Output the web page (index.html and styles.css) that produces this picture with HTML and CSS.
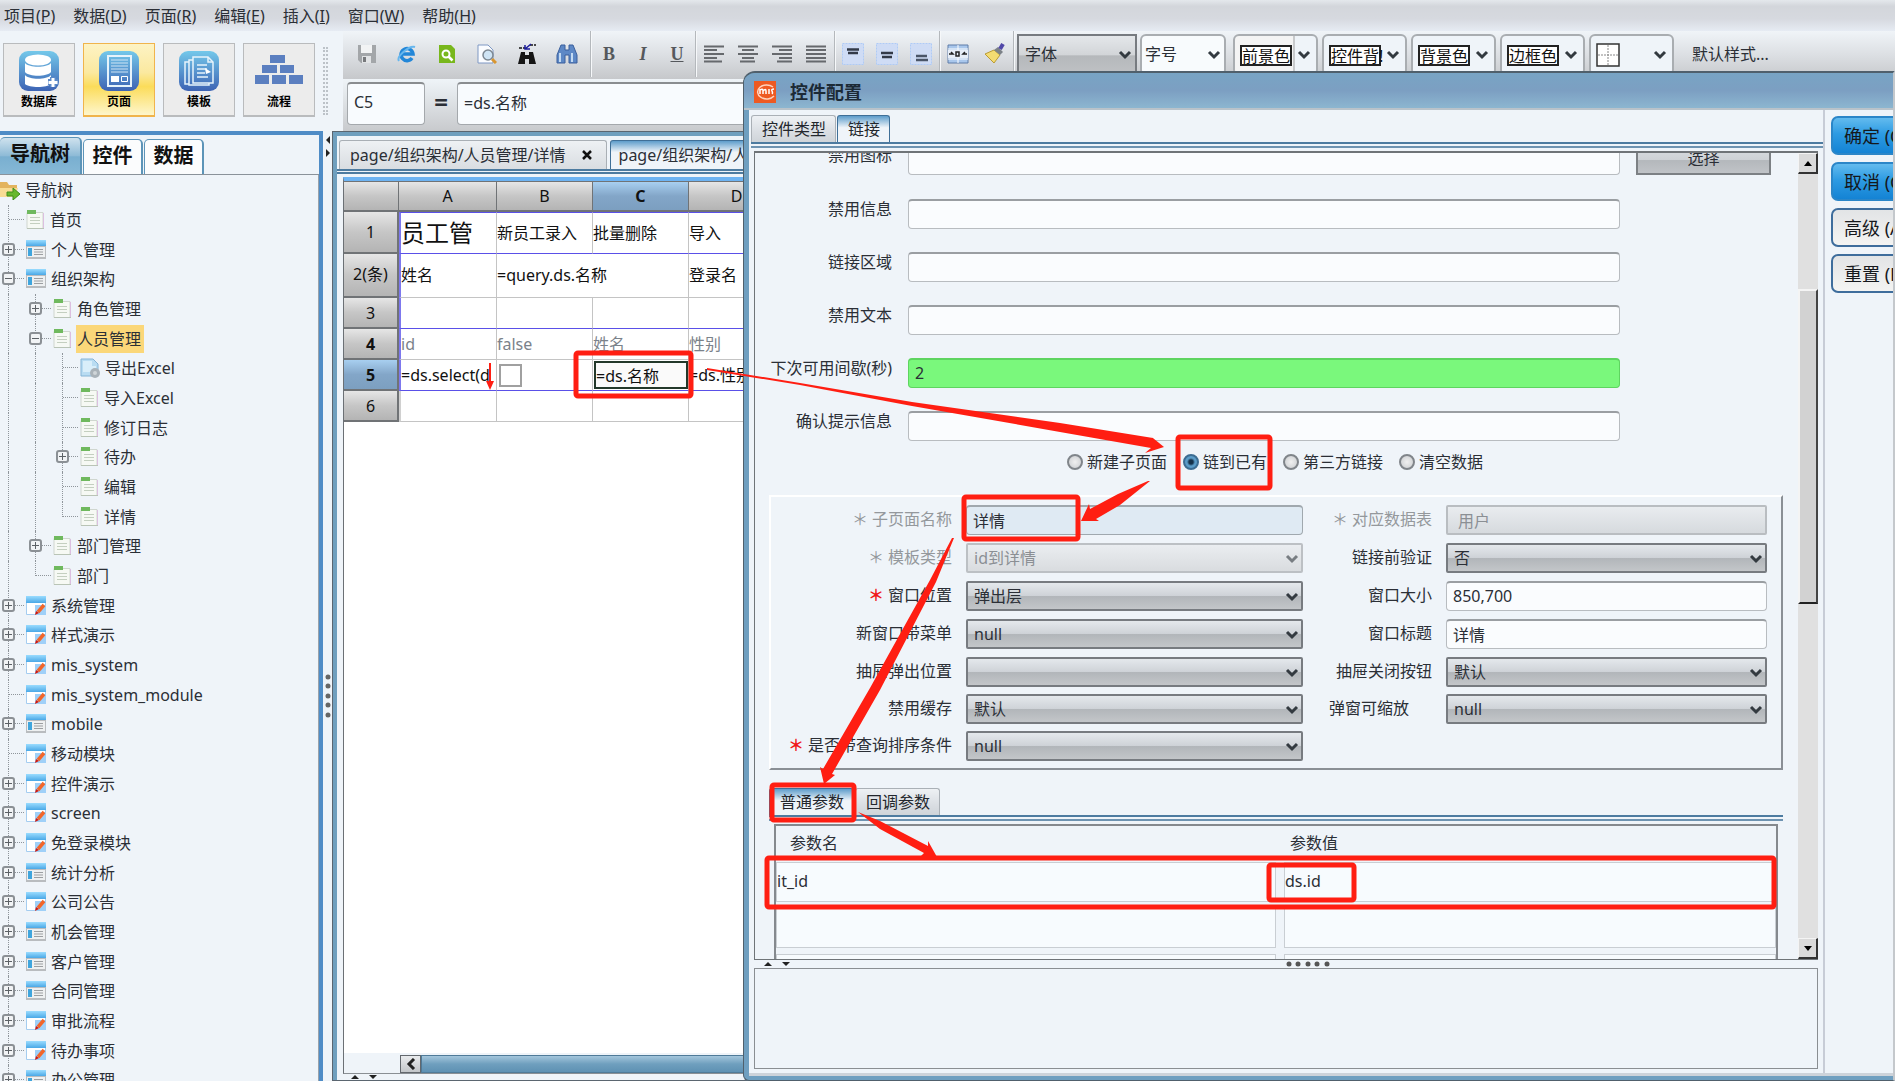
FILE: index.html
```
<!DOCTYPE html>
<html lang="zh-CN">
<head>
  <meta charset="UTF-8" />
  <meta name="viewport" content="width=device-width, initial-scale=1.0"/>
  <title>控件配置</title>
  <link rel="stylesheet" href="styles.css">
</head>
<body>

<!-- shared icons -->
<svg class="defs" aria-hidden="true">
  <defs>
    <linearGradient id="g-app" x1="0" y1="0" x2="0" y2="1"><stop offset="0" stop-color="#74c8ea"/><stop offset="1" stop-color="#3d63b4"/></linearGradient>
    <linearGradient id="g-bar" x1="0" y1="0" x2="0" y2="1"><stop offset="0" stop-color="#9adcff"/><stop offset="1" stop-color="#4aa8e6"/></linearGradient>
  </defs>
  <symbol id="i-chev" viewBox="0 0 14 10"><path d="M2 2l5 5 5-5" fill="none" stroke="#333a40" stroke-width="3"/></symbol>
  <symbol id="i-page" viewBox="0 0 20 20">
    <path d="M1 2.500h16v16h-16z" fill="#f6f9f4" stroke="#cfd6cf"/><path d="M17.500 3v16" stroke="#dcbfe0"/>
    <path d="M1 0h9v4h-9z" fill="#6fb95e"/><path d="M4 7.500h10M4 10.500h10M4 13.500h10" stroke="#c4cfc0"/><path d="M1 18.500h17" stroke="#b9c4b6"/>
  </symbol>
  <symbol id="i-module" viewBox="0 0 20 20">
    <path d="M0 0h20v19h-20z" fill="#b9bcbf"/><path d="M1 7h18v10h-18z" fill="#eef0f1"/><path d="M0 0h20v6h-20z" fill="url(#g-bar)"/>
    <path d="M2 8h4v8h-4z" fill="#3fa5dd"/><path d="M8 9.500h9M8 12h9M8 14.500h9" stroke="#9c9fa2"/>
  </symbol>
  <symbol id="i-edit" viewBox="0 0 20 20">
    <path d="M.5.500h19v18h-19z" fill="#fff" stroke="#a5cdf0"/><path d="M0 0h20v7h-20z" fill="url(#g-bar)"/>
    <path d="M9 9h11v10h-11z" fill="#9fd0f8"/><path d="M12 16l6-7" stroke="#f2662a" stroke-width="3.500"/><path d="M9 19l1-4 3 2z" fill="#d3180c"/>
  </symbol>
  <symbol id="i-export" viewBox="0 0 20 20">
    <path d="M1 1h12l5 5v12h-17z" fill="#b9dcf2" stroke="#85b4d6"/><path d="M3 3h9v5h4v6h-13z" fill="#d9eefa"/>
    <circle cx="15" cy="15" r="5" fill="#a9b2b9"/><circle cx="15" cy="15" r="2" fill="#cfd5d9"/>
  </symbol>
  <symbol id="i-folder" viewBox="0 0 20 20">
    <path d="M0 2h7l2 3h8v12h-17z" fill="#e3b45e"/><path d="M0 8h18l-3 9h-15z" fill="#f8dc94"/>
    <path d="M7 12h6v-4l7 6-7 6v-4h-6z" fill="#68b82e" stroke="#3f8f1c"/>
  </symbol>
</svg>

<nav class="menubar">
  <a href="#">项目(<u>P</u>)</a>
  <a href="#">数据(<u>D</u>)</a>
  <a href="#">页面(<u>R</u>)</a>
  <a href="#">编辑(<u>E</u>)</a>
  <a href="#">插入(<u>I</u>)</a>
  <a href="#">窗口(<u>W</u>)</a>
  <a href="#">帮助(<u>H</u>)</a>
</nav>

<header class="top">
  <div class="modes">
    <button class="mode">
      <svg width="40" height="40" viewBox="0 0 40 40"><rect width="40" height="40" rx="9" fill="url(#g-app)"/><g fill="#fff"><ellipse cx="19" cy="9" rx="13" ry="5.500"/><path d="M6 12c4 5 22 5 26 0v9c-4 5-22 5-26 0zM6 24c4 5 22 5 26 0v9c-4 4-22 4-26 0z"/></g><path d="M34 26v10M29 31h10" stroke="#5c8ac8" stroke-width="6"/><path d="M34 27v9M29.500 31.500h9" stroke="#fff" stroke-width="3"/></svg>
      数据库
    </button>
    <button class="mode active">
      <svg width="40" height="40" viewBox="0 0 40 40"><rect width="40" height="40" rx="9" fill="url(#g-app)"/><path d="M9 5h23v30h-23z" fill="none" stroke="#e6f3fb" stroke-width="2"/><path d="M12 9h17M12 12h17M12 15h17M12 18h17M12 21h17" stroke="#cfe4f5"/><path d="M12 25h8v6h-8z" fill="#fff"/><path d="M22.500 25.500h6v5h-6z" fill="none" stroke="#fff"/></svg>
      页面
    </button>
    <button class="mode">
      <svg width="40" height="40" viewBox="0 0 40 40"><rect width="40" height="40" rx="9" fill="url(#g-app)"/><g fill="none" stroke="#e6f3fb" stroke-width="1.500"><path d="M14 6h15l5 5v21h-20zM14 9h-4v25h20v-2M10 11h-4v22h4"/><path d="M29 6v5h5M18 14h10M18 18h10M18 22h8M18 26h11"/></g><path d="M26 17l6 4-5 2z" fill="#fff"/></svg>
      模板
    </button>
    <button class="mode">
      <svg width="48" height="40" viewBox="0 0 48 40"><path d="M15 4h15v8h-15zM7 14h15v8h-15zM25 14h14v8h-14zM0 24h14v9h-14zM17 24h14v9h-14zM34 24h14v9h-14z" fill="#5b7fc0"/></svg>
      流程
    </button>
    <span class="grip"></span>
  </div>

  <div class="tools">
    <div class="iconbar">
      <div class="group files">
        <button class="tool" aria-label="保存"><svg width="20" height="20" viewBox="0 0 20 20"><path d="M1 1h18v18h-15l-3-3z" fill="#a3a6a9"/><path d="M4 1h11v8h-11z" fill="#f2f3f4"/><path d="M5 12h9v7h-9z" fill="#e1e3e5"/><path d="M6 13h3v5h-3z" fill="#77797c"/></svg></button>
        <button class="tool" aria-label="浏览"><svg width="20" height="20" viewBox="0 0 20 20"><path d="M15 14a6 6 0 1 1 1-4h-11" fill="none" stroke="#2387d8" stroke-width="3.500"/><path d="M2 17c-3-4 10-16 16-14" fill="none" stroke="#67b7ee" stroke-width="2"/></svg></button>
        <button class="tool" aria-label="预览"><svg width="20" height="20" viewBox="0 0 20 20"><path d="M2 1h12l4 4v14h-16z" fill="#78b71c"/><circle cx="9" cy="10" r="3.500" fill="none" stroke="#fff" stroke-width="2"/><path d="M11.500 12.500l4 4" stroke="#fff" stroke-width="2.500"/></svg></button>
        <button class="tool" aria-label="打印预览"><svg width="20" height="20" viewBox="0 0 20 20"><path d="M1 1h10l5 5v13h-15z" fill="#fafcff" stroke="#7e98c4"/><circle cx="11" cy="11" r="5" fill="#cfe4f4" stroke="#7d8892" stroke-width="1.500"/><path d="M15 15l4 4" stroke="#d99630" stroke-width="3"/></svg></button>
        <button class="tool" aria-label="替换"><svg width="20" height="22" viewBox="0 0 20 22"><path d="M4 9h4v3h4v-3h4l3 12h-7v-5h-4v5h-7z" fill="#151515"/><path d="M2 5h6M13 2h6" stroke="#151515" stroke-width="1.500" stroke-dasharray="3 1"/><path d="M8 6l6-5M8 2v4h5" fill="none" stroke="#1c1c9c" stroke-width="1.500"/></svg></button>
        <button class="tool" aria-label="查找"><svg width="22" height="20" viewBox="0 0 22 20"><path d="M5 1h4v5h4v-5h4l4 10v8h-8v-8h-4v8h-8v-8z" fill="#5d88c6" stroke="#3a5f9c"/><path d="M4 9v9M16 9v9" stroke="#c3daf2" stroke-width="2"/></svg></button>
      </div>
      <div class="group">
        <button class="tool glyph"><b>B</b></button>
        <button class="tool glyph"><i>I</i></button>
        <button class="tool glyph"><u>U</u></button>
      </div>
      <div class="group">
        <button class="tool" aria-label="左对齐"><svg class="align" width="20" height="18" viewBox="0 0 20 18"><path d="M0 1.500h20M0 5h13M0 9h20M0 13h13M0 16.500h18"/></svg></button>
        <button class="tool" aria-label="居中"><svg class="align" width="20" height="18" viewBox="0 0 20 18"><path d="M0 1.500h20M4 5h12M0 9h20M4 13h12M2 16.500h15"/></svg></button>
        <button class="tool" aria-label="右对齐"><svg class="align" width="20" height="18" viewBox="0 0 20 18"><path d="M0 1.500h20M7 5h13M0 9h20M7 13h13M5 16.500h15"/></svg></button>
        <button class="tool" aria-label="两端对齐"><svg class="align" width="20" height="18" viewBox="0 0 20 18"><path d="M0 1.500h20M0 5h20M0 9h20M0 13h20M0 16.500h20"/></svg></button>
      </div>
      <div class="group">
        <button class="tool" aria-label="顶端"><svg width="22" height="22" viewBox="0 0 22 22"><rect x=".5" y=".5" width="21" height="21" fill="#cfdcf5" stroke="#aecbf7" stroke-dasharray="2 1"/><path d="M5 6.500h12M6 10h10" stroke="#333a48" stroke-width="2.500"/></svg></button>
        <button class="tool" aria-label="中部"><svg width="22" height="22" viewBox="0 0 22 22"><rect x=".5" y=".5" width="21" height="21" fill="#cfdcf5" stroke="#aecbf7" stroke-dasharray="2 1"/><path d="M5 10h12M6 14h10" stroke="#333a48" stroke-width="2.500"/></svg></button>
        <button class="tool" aria-label="底端"><svg width="22" height="22" viewBox="0 0 22 22"><rect x=".5" y=".5" width="21" height="21" fill="#cfdcf5" stroke="#aecbf7" stroke-dasharray="2 1"/><path d="M6 13h11M6 17h12" stroke="#4a5568" stroke-width="2.500"/></svg></button>
      </div>
      <div class="group">
        <button class="tool" aria-label="合并"><svg width="22" height="20" viewBox="0 0 22 20"><path d="M1 1h20v18h-20z" fill="#a9c7ec" stroke="#5f7da8"/><path d="M11 1v18M1 5h20M1 15h20" stroke="#fff"/><path d="M1 6h20v8h-20z" fill="#e7eef7"/><path d="M2 10h4l-2-2M20 10h-4l2-2M9 8h3v4h-3z" fill="none" stroke="#222" stroke-width="1.500"/></svg></button>
        <button class="tool" aria-label="格式刷"><svg width="22" height="22" viewBox="0 0 22 22"><path d="M1 11l9-4 6 5-6 8z" fill="#f4dc72" stroke="#b99a35"/><path d="M10 7l4-3 5 5-3 3z" fill="#7c8288"/><path d="M16 6l3-5" stroke="#5148a8" stroke-width="4"/></svg></button>
      </div>
      <span class="pick pick-font"><select aria-label="字体"><option>字体</option></select><svg width="14" height="10"><use href="#i-chev"/></svg></span>
      <span class="pick pick-size"><select aria-label="字号"><option>字号</option></select><svg width="14" height="10"><use href="#i-chev"/></svg></span>
      <button class="swatch first"><span>前景色</span><svg width="14" height="10"><use href="#i-chev"/></svg></button>
      <button class="swatch"><span>控件背!</span><svg width="14" height="10"><use href="#i-chev"/></svg></button>
      <button class="swatch"><span>背景色</span><svg width="14" height="10"><use href="#i-chev"/></svg></button>
      <button class="swatch"><span>边框色</span><svg width="14" height="10"><use href="#i-chev"/></svg></button>
      <button class="swatch" aria-label="边框"><svg width="24" height="24" viewBox="0 0 24 24"><path d="M1 1h22v22h-22z" fill="#fff" stroke="#333" stroke-width="1.500"/><path d="M12 2v20M2 12h20" stroke="#888" stroke-dasharray="2 1"/></svg><svg width="14" height="10"><use href="#i-chev"/></svg></button>
      <button class="plain">默认样式...</button>
    </div>
    <div class="formula">
      <input class="cell-name" type="text" value="C5" aria-label="单元格">
      <span class="equals">=</span>
      <input class="cell-value" type="text" value="=ds.名称" aria-label="公式">
    </div>
  </div>
</header>

<main class="work">
  <aside class="side">
    <div class="side-tabs">
      <button class="side-tab active">导航树</button>
      <button class="side-tab">控件</button>
      <button class="side-tab">数据</button>
    </div>
    <ul class="tree" id="tree"></ul>
  </aside>

  <div class="splitter">
    <svg width="8" height="24" viewBox="0 0 8 24"><path d="M6 1l-4 4 4 4zM2 14l4 4-4 4z" fill="#222"/></svg>
    <svg class="dots" width="8" height="46" viewBox="0 0 8 46"><g fill="#666"><circle cx="4" cy="4" r="2.500"/><circle cx="4" cy="13" r="2.500"/><circle cx="4" cy="23" r="2.500"/><circle cx="4" cy="32" r="2.500"/><circle cx="4" cy="42" r="2.500"/></g></svg>
  </div>

  <section class="editor">
    <div class="doc-tabs">
      <button class="doc-tab">page/组织架构/人员管理/详情 <svg width="10" height="10" viewBox="0 0 10 10"><path d="M1 1l8 8M9 1l-8 8" stroke="#111" stroke-width="2.500"/></svg></button>
      <button class="doc-tab active">page/组织架构/人员管理</button>
    </div>
    <div class="sheet">
      <table>
        <colgroup><col class="c-head"><col class="c-a"><col><col><col></colgroup>
        <tr class="cols"><th></th><th>A</th><th>B</th><th class="sel">C</th><th>D</th></tr>
        <tr class="r1 line"><th>1</th><td class="big">员工管</td><td>新员工录入</td><td>批量删除</td><td>导入</td></tr>
        <tr class="r2"><th>2(条)</th><td>姓名</td><td colspan="2">=query.ds.名称</td><td>登录名</td></tr>
        <tr class="line"><th>3</th><td></td><td></td><td></td><td></td></tr>
        <tr class="muted"><th class="bold">4</th><td>id</td><td>false</td><td>姓名</td><td>性别</td></tr>
        <tr class="line"><th class="sel">5</th><td>=ds.select(d</td><td><input class="cell-check" type="checkbox" aria-label="false"></td><td><input class="cell-edit" type="text" value="=ds.名称" aria-label="C5"></td><td>=ds.性别</td></tr>
        <tr class="last"><th>6</th><td></td><td></td><td></td><td></td></tr>
      </table>
    </div>
    <div class="hscroll"><button aria-label="向左"><svg width="10" height="12" viewBox="0 0 10 12"><path d="M8 1l-5 5 5 5" fill="none" stroke="#222" stroke-width="3"/></svg></button><span></span></div>
    <div class="under"><svg width="30" height="6" viewBox="0 0 30 6"><path d="M2 5l4-4 4 4zM20 1l4 4 4-4z" fill="#222"/></svg></div>
  </section>
</main>

<section class="dialog" role="dialog" aria-labelledby="dialog-title">
  <div class="titlebar">
    <svg width="22" height="22" viewBox="0 0 22 22"><rect width="22" height="22" fill="#ee5a22"/><path d="M20 15a9 7 0 1 1-1-9" fill="none" stroke="#ffd2bd" stroke-width="1.500"/><path d="M6 13v-5M6 9q3-2 3 1v3M9 10q3-3 3 0v3M15 8v5M20 8q-3 0-2 2t0 3" fill="none" stroke="#fff" stroke-width="1.500"/></svg>
    <h1 id="dialog-title">控件配置</h1>
  </div>
  <div class="dialog-body">
    <div class="dialog-main">
      <div class="tabs">
        <button class="tab">控件类型</button>
        <button class="tab active">链接</button>
      </div>
      <div class="tab-rule"></div>

      <div class="scroller">
        <div class="form">
          <div class="field cut"><label for="f-icon">禁用图标</label><input id="f-icon" type="text"><button class="choose">选择</button></div>
          <div class="field"><label for="f-info">禁用信息</label><input id="f-info" type="text"></div>
          <div class="field"><label for="f-area">链接区域</label><input id="f-area" type="text"></div>
          <div class="field"><label for="f-text">禁用文本</label><input id="f-text" type="text"></div>
          <div class="field"><label for="f-wait">下次可用间歇(秒)</label><input id="f-wait" class="green" type="text" value="2"></div>
          <div class="field"><label for="f-confirm">确认提示信息</label><input id="f-confirm" type="text"></div>

          <div class="radios">
            <label><input type="radio" name="target">新建子页面</label>
            <label><input type="radio" name="target" checked>链到已有</label>
            <label><input type="radio" name="target">第三方链接</label>
            <label><input type="radio" name="target">清空数据</label>
          </div>

          <div class="options">
            <label class="off" for="o-name"><i>＊</i>子页面名称</label>
            <input id="o-name" class="tinted" type="text" value="详情">
            <label class="off" for="o-table"><i>＊</i>对应数据表</label>
            <input id="o-table" class="flat" type="text" value="用户" disabled>

            <label class="off" for="o-type"><i>＊</i>模板类型</label>
            <span class="select off"><select id="o-type" disabled><option>id到详情</option></select><svg width="14" height="10"><use href="#i-chev"/></svg></span>
            <label for="o-check">链接前验证</label>
            <span class="select"><select id="o-check"><option>否</option></select><svg width="14" height="10"><use href="#i-chev"/></svg></span>

            <label for="o-pos"><i>＊</i>窗口位置</label>
            <span class="select"><select id="o-pos"><option>弹出层</option></select><svg width="14" height="10"><use href="#i-chev"/></svg></span>
            <label for="o-size">窗口大小</label>
            <input id="o-size" type="text" value="850,700">

            <label for="o-menu">新窗口带菜单</label>
            <span class="select"><select id="o-menu"><option>null</option></select><svg width="14" height="10"><use href="#i-chev"/></svg></span>
            <label for="o-title">窗口标题</label>
            <input id="o-title" type="text" value="详情">

            <label for="o-drawer">抽屉弹出位置</label>
            <span class="select"><select id="o-drawer"><option></option></select><svg width="14" height="10"><use href="#i-chev"/></svg></span>
            <label for="o-close">抽屉关闭按钮</label>
            <span class="select"><select id="o-close"><option>默认</option></select><svg width="14" height="10"><use href="#i-chev"/></svg></span>

            <label for="o-cache">禁用缓存</label>
            <span class="select"><select id="o-cache"><option>默认</option></select><svg width="14" height="10"><use href="#i-chev"/></svg></span>
            <label class="start" for="o-zoom">弹窗可缩放</label>
            <span class="select"><select id="o-zoom"><option>null</option></select><svg width="14" height="10"><use href="#i-chev"/></svg></span>

            <label for="o-sort"><i>＊</i>是否带查询排序条件</label>
            <span class="select"><select id="o-sort"><option>null</option></select><svg width="14" height="10"><use href="#i-chev"/></svg></span>
          </div>

          <div class="params">
            <div class="tabs">
              <button class="tab active">普通参数</button>
              <button class="tab">回调参数</button>
            </div>
            <div class="tab-rule"></div>
            <div class="param-box">
              <table>
                <tr><th>参数名</th><th>参数值</th></tr>
                <tr><td><div>it_id</div></td><td><div>ds.id</div></td></tr>
                <tr><td><div></div></td><td><div></div></td></tr>
                <tr><td><div></div></td><td><div></div></td></tr>
              </table>
            </div>
          </div>
        </div>
        <div class="vscroll">
          <button aria-label="向上"><svg width="8" height="5" viewBox="0 0 8 5"><path d="M4 0l4 5h-8z"/></svg></button>
          <span class="thumb"></span>
          <button aria-label="向下"><svg width="8" height="5" viewBox="0 0 8 5"><path d="M4 5l4-5h-8z"/></svg></button>
        </div>
      </div>

      <div class="divider">
        <svg width="30" height="6" viewBox="0 0 30 6"><path d="M2 5l4-4 4 4zM20 1l4 4 4-4z" fill="#222"/></svg>
        <svg width="44" height="6" viewBox="0 0 44 6"><g fill="#555"><circle cx="3" cy="3" r="2.500"/><circle cx="12" cy="3" r="2.500"/><circle cx="22" cy="3" r="2.500"/><circle cx="31" cy="3" r="2.500"/><circle cx="41" cy="3" r="2.500"/></g></svg>
      </div>
      <div class="message"></div>
    </div>

    <div class="actions">
      <button class="primary">确定 (O)</button>
      <button class="primary">取消 (C)</button>
      <button>高级 (A)</button>
      <button>重置 (R)</button>
    </div>
  </div>
</section>

<!-- red marks over the whole desktop -->
<svg class="marks" width="1895" height="1081" viewBox="0 0 1895 1081" aria-hidden="true">
  <g fill="none" stroke="#ff1e12" stroke-width="5">
    <rect x="576" y="353" width="115" height="43" rx="2"/>
    <rect x="1178" y="437" width="92" height="51" rx="2"/>
    <rect x="964" y="497" width="114" height="42" rx="2"/>
    <rect x="772" y="785" width="82" height="35" rx="2"/>
    <rect x="767" y="858" width="1007" height="49" rx="2"/>
    <rect x="1269" y="865" width="85" height="35" rx="2"/>
  </g>
  <g fill="#ff1e12">
    <path d="M707 368L800 383 912 402 1060 423 1153 438 1148 434 1164 447 1145 453 1151 448 1060 432 912 406 800 385 707 370z"/>
    <path d="M1150 481L1120 505 1096 519 1099 521 1081 521 1089 504 1090 509 1118 494 1148 481z"/>
    <path d="M954 538L936 582 880 690 832 774 835 775 824 784 820 767 823 769 870 688 930 580 952 538z"/>
    <path d="M858 812L880 821 928 846 928 841 937 857 920 857 924 853 880 829z"/>
    <path d="M489 363h2v18h3l-4 9-4-9h3z"/>
  </g>
</svg>

<script>
  // level, icon, text, branch: '+' closed, '-' open, '' leaf
  const nodes = [
    [0, 'page', '首页', ''],
    [0, 'module', '个人管理', '+'],
    [0, 'module', '组织架构', '-'],
    [1, 'page', '角色管理', '+'],
    [1, 'page', '人员管理', '-'],
    [2, 'export', '导出Excel', ''],
    [2, 'page', '导入Excel', ''],
    [2, 'page', '修订日志', ''],
    [2, 'page', '待办', '+'],
    [2, 'page', '编辑', ''],
    [2, 'page', '详情', ''],
    [1, 'page', '部门管理', '+'],
    [1, 'page', '部门', ''],
    [0, 'edit', '系统管理', '+'],
    [0, 'edit', '样式演示', '+'],
    [0, 'edit', 'mis_system', '+'],
    [0, 'edit', 'mis_system_module', ''],
    [0, 'module', 'mobile', '+'],
    [0, 'edit', '移动模块', ''],
    [0, 'edit', '控件演示', '+'],
    [0, 'edit', 'screen', '+'],
    [0, 'edit', '免登录模块', '+'],
    [0, 'module', '统计分析', '+'],
    [0, 'edit', '公司公告', '+'],
    [0, 'module', '机会管理', '+'],
    [0, 'module', '客户管理', '+'],
    [0, 'module', '合同管理', '+'],
    [0, 'edit', '审批流程', '+'],
    [0, 'edit', '待办事项', '+'],
    [0, 'module', '办公管理', '+'],
  ];

  // is there a later sibling on this level
  function goesOn(index, level) {
    if (level === 0) return true;
    for (let i = index + 1; i < nodes.length; i++) {
      if (nodes[i][0] < level) return false;
      if (nodes[i][0] === level) return true;
    }
    return false;
  }

  const tree = document.getElementById('tree');
  let html = '<li><svg width="20" height="20"><use href="#i-folder"/></svg><a href="#">导航树</a></li>';
  nodes.forEach(([level, icon, text, branch], index) => {
    let row = '';
    for (let l = 0; l < level; l++) {
      row += `<span class="guide${goesOn(index, l) ? ' on' : ''}"></span>`;
    }
    row += `<span class="branch${goesOn(index, level) ? '' : ' end'}">`;
    if (branch) row += `<span class="knob${branch === '+' ? ' plus' : ''}"></span>`;
    row += `</span><svg width="20" height="20" class="${icon}"><use href="#i-${icon}"/></svg>`;
    row += `<a href="#"${text === '人员管理' ? ' class="current"' : ''}>${text}</a>`;
    html += `<li>${row}</li>`;
  });
  tree.innerHTML = html;
</script>

</body>
</html>
```

FILE: styles.css
```
* {
  box-sizing: border-box;
}

body {
  margin: 0;
  height: 100vh;
  overflow: hidden;
  position: relative;
  display: flex;
  flex-direction: column;
  background: #eff4f9;
  color: #2b2f36;
  font-family: "Noto Sans", "Noto Sans CJK SC", sans-serif;
  font-size: 16px;
  line-height: 20px;
}

button,
input,
select {
  font: inherit;
  color: inherit;
  margin: 0;
  padding: 0;
  border-radius: 0;
}

button {
  white-space: nowrap;
  cursor: pointer;
}

a {
  color: inherit;
  text-decoration: none;
}

svg {
  flex: none;
  display: block;
}

.defs {
  position: absolute;
  width: 0;
  height: 0;
}

/* menu */
.menubar {
  flex: none;
  display: flex;
  gap: 18px;
  height: 31px;
  padding: 6px 4px;
  background: linear-gradient(#e4e8ec, #d3d6db 20%, #d6d9df 60%, #e6ebf3);
}

/* toolbar */
.top {
  flex: none;
  display: flex;
  height: 100px;
}

.modes {
  flex: none;
  display: flex;
  gap: 8px;
  width: 343px;
  padding: 12px 3px;
}

.mode {
  width: 72px;
  height: 74px;
  display: flex;
  flex-direction: column;
  align-items: center;
  gap: 1px;
  padding-top: 7px;
  background: #ececec;
  border: 1px solid #b9bbbd;
  border-bottom: 2px solid #b9bbbd;
  color: #000;
  font-size: 12px;
  font-weight: bold;
}

.mode.active {
  background: linear-gradient(#fdf3c4, #fbe9a0 40%, #fbdc5a 60%, #fef6cc);
  border-color: #f0b44c;
}

.grip {
  width: 5px;
  height: 68px;
  margin-top: 4px;
  border-left: 2px dotted #bcc2c8;
  border-right: 2px dotted #bcc2c8;
}

.tools {
  flex: 1;
  min-width: 0;
}

.iconbar {
  display: flex;
  height: 48px;
  background: linear-gradient(#f0f4f8, #dcdfe3 50%, #c6c8cb);
}

.group {
  flex: none;
  display: flex;
  align-items: center;
  gap: 10px;
  height: 46px;
  padding: 0 6px;
  border-right: 1px solid #b4b8bc;
  box-shadow: 1px 0 #f6f8fa;
}

.group.files {
  gap: 16px;
  padding: 0 11px 0 12px;
}

.group:nth-child(5) {
  gap: 13px;
}

.tool {
  width: 24px;
  height: 24px;
  display: flex;
  align-items: center;
  justify-content: center;
  background: none;
  border: 0;
}

.glyph {
  color: #55585c;
  font-family: "Liberation Serif", serif;
  font-size: 18px;
  font-weight: bold;
}

.align {
  fill: none;
  stroke: #66696d;
  stroke-width: 2;
}

.pick {
  flex: none;
  position: relative;
  margin: 3px 0 0 3px;
  height: 42px;
}

.pick select {
  appearance: none;
  width: 100%;
  height: 100%;
  padding: 0 6px 2px;
  background: linear-gradient(#e4e7ea, #d2d5d8 50%, #b5b8bb 52%, #bfc1c4);
  border: 2px solid #777b80;
}

.pick svg {
  position: absolute;
  right: 5px;
  top: 16px;
}

.pick-font {
  width: 120px;
}

.pick-size {
  width: 86px;
  margin-right: 7px;
}

.pick-size select {
  padding: 0 3px 2px;
  background: #f8fbfd;
  border: 2px solid #a9adb1;
  border-radius: 6px;
}

.swatch {
  flex: none;
  display: flex;
  align-items: center;
  justify-content: space-between;
  width: 85px;
  height: 42px;
  margin: 3px 4px 0 0;
  padding: 0 5px;
  background: #eff4f9;
  border: 2px solid #a9adb1;
  border-radius: 6px;
}

.swatch.first {
  background: linear-gradient(90deg, #f4f4f4 58px, #c8cacc 58px, #c8cacc 60px, #eff4f9 60px);
}

.swatch span {
  width: 52px;
  height: 21px;
  border: 2px solid #222;
  background: #fff;
  color: #111;
  line-height: 19px;
}

.plain {
  height: 46px;
  margin-left: 14px;
  background: none;
  border: 0;
}

.formula {
  display: flex;
  align-items: flex-start;
  height: 52px;
  padding: 3px 4px 0;
  background: linear-gradient(#eff4f8, #c8cacd);
}

.formula input {
  height: 43px;
  padding: 0 6px 4px;
  background: #f8fbfe;
  border: 1px solid #a4a8ac;
  border-top: 2px solid #8a8d90;
  border-radius: 4px;
}

.formula .cell-name {
  width: 78px;
}

.equals {
  width: 32px;
  text-align: center;
  font-size: 24px;
  font-weight: bold;
  line-height: 40px;
}

.formula .cell-value {
  flex: 1;
}

/* navigation */
.work {
  flex: 1;
  min-height: 0;
  display: flex;
}

.side {
  flex: none;
  width: 323px;
  border-top: 4px solid #4f8cc6;
  border-right: 4px solid #4f8cc6;
  overflow: hidden;
}

.side-tabs {
  display: flex;
  align-items: flex-end;
  gap: 1px;
  height: 40px;
  border-bottom: 1px solid #8a929a;
}

.side-tab {
  width: 60px;
  height: 35px;
  padding-bottom: 2px;
  background: #fbfcfd;
  border: 1px solid #5c94b8;
  border-bottom: 0;
  border-right-width: 2px;
  border-radius: 5px 5px 0 0;
  color: #111;
  font-size: 20px;
  font-weight: bold;
}

.side-tab.active {
  width: 82px;
  height: 37px;
  padding-bottom: 4px;
  border-left: 0;
  background: linear-gradient(#cfe2ee, #8dbad6 50%, #79afd0 52%, #86b8d6);
}

.tree {
  height: 100%;
  margin: 0;
  padding: 0;
  list-style: none;
  border-right: 1px solid #9aa2aa;
}

/* every third row is one pixel shorter */
.tree li {
  display: flex;
  align-items: center;
  height: 30px;
}

.tree li:nth-child(3n) {
  height: 29px;
}

.tree a {
  height: 28px;
  margin-left: 4px;
  padding: 0 3px 0 1px;
  line-height: 28px;
}

.tree .page + a {
  margin-left: 3px;
}

.tree .current {
  background: #fbd779;
}

.guide,
.branch {
  flex: none;
  position: relative;
  width: 26px;
  height: 100%;
}

.guide {
  width: 27px;
}

.guide.on::before,
.branch::before {
  content: "";
  position: absolute;
  left: 8px;
  top: 0;
  bottom: 0;
  border-left: 1px dotted #8f959b;
}

.branch.end::before {
  bottom: 50%;
}

.branch::after {
  content: "";
  position: absolute;
  left: 9px;
  right: 2px;
  top: 14px;
  border-top: 1px dotted #8f959b;
}

.knob {
  position: absolute;
  z-index: 1;
  left: 2px;
  top: 8px;
  width: 13px;
  height: 13px;
  border: 2px solid #8b9095;
  border-radius: 3px;
  background: linear-gradient(#5c6166, #5c6166) center / 7px 1px no-repeat #f1f3f5;
}

.knob.plus {
  background: linear-gradient(#5c6166, #5c6166) center / 7px 1px no-repeat, linear-gradient(#5c6166, #5c6166) center / 1px 7px no-repeat #f1f3f5;
}

.splitter {
  flex: none;
  display: flex;
  flex-direction: column;
  align-items: center;
  justify-content: space-between;
  width: 9px;
  padding-top: 4px;
}

.splitter .dots {
  margin-bottom: 362px;
}

/* sheet editor */
.editor {
  flex: 1;
  min-width: 0;
  display: flex;
  flex-direction: column;
  border-top: 5px solid #6f9fbe;
  border-left: 5px solid #6f9fbe;
  outline: 1px solid #5b6670;
  outline-offset: -1px;
}

.doc-tabs {
  flex: none;
  display: flex;
  gap: 3px;
  height: 38px;
  padding: 4px 2px 0;
  border-bottom: 5px double #4d7ba0;
}

.doc-tab {
  display: flex;
  align-items: center;
  gap: 16px;
  height: 29px;
  padding: 0 14px 0 10px;
  background: linear-gradient(#eef1f4, #d9dde1);
  border: 1px solid #a9afb5;
  border-bottom: 0;
  border-radius: 3px 3px 0 0;
}

.doc-tab.active {
  padding: 0 9px 0 8px;
  background: linear-gradient(#5e9dcb, #eff4f9 40%);
  border-color: #3f6f97;
}

.sheet {
  flex: 1;
  min-height: 0;
  margin: 3px 0 0 6px;
  overflow: hidden;
  background: #fff;
  border-top: 4px solid #6db3f2;
  border-left: 1px solid #6b7075;
}

.sheet table {
  width: 441px;
  table-layout: fixed;
  border-spacing: 0;
  color: #111;
}

.c-head {
  width: 55px;
}

.c-a {
  width: 98px;
}

.sheet th {
  padding: 0;
  border-right: 2px solid #707376;
  border-bottom: 2px solid #707376;
  background: linear-gradient(#e6e6e6, #c6c6c6 50%, #b4b4b4);
  font-weight: normal;
}

.sheet .cols th {
  border-top: 1px solid #707376;
  border-right-width: 1px;
}

.sheet th.sel {
  background: linear-gradient(#a8cff0, #83a6c8 50%, #7c9fc0);
  font-weight: bold;
}

.sheet th.bold {
  font-weight: bold;
}

.sheet td {
  padding: 0;
  overflow: hidden;
  white-space: nowrap;
  border-right: 1px solid #c4c4c4;
  border-bottom: 1px solid #c4c4c4;
}

.sheet tr {
  height: 31px;
}

.sheet .r1 {
  height: 42px;
}

.sheet .r2 {
  height: 44px;
}

.sheet .r2 td,
.sheet .r2 th {
  padding-bottom: 2px;
}

.sheet .r1 td {
  border-top: 1px solid #5a50e8;
}

.sheet .line td {
  border-bottom: 1px solid #5a50e8;
}

.sheet td:nth-child(2) {
  border-left: 2px solid #7d78ee;
}

.sheet .last td:nth-child(2) {
  border-left-color: #d0d0d0;
}

.sheet .muted td {
  color: #7b828a;
}

.sheet .big {
  font-size: 24px;
}

.cell-check {
  appearance: none;
  display: block;
  width: 23px;
  height: 23px;
  margin-left: 2px;
  background: #fff;
  border: 2px solid #a0a0a0;
}

.cell-edit {
  display: block;
  width: 94px;
  height: 28px;
  margin-left: 1px;
  background: #fafafa;
  border: 2px solid #23382a;
}

.hscroll {
  flex: none;
  display: flex;
  height: 21px;
  margin-left: 6px;
  padding: 2px 0 0 56px;
  border-left: 1px solid #6b7075;
  border-bottom: 1px solid #8a8f94;
}

.hscroll button {
  display: flex;
  align-items: center;
  justify-content: center;
  width: 21px;
  background: linear-gradient(#e9ebed, #c3c6c9);
  border: 1px solid #63686d;
}

.hscroll span {
  flex: 1;
  background: linear-gradient(#a4c6dc, #6f9fbe 50%, #5e91b3);
  border: 1px solid #4f7a98;
}

.under {
  flex: none;
  height: 7px;
  padding-left: 12px;
}

/* dialog */
.dialog {
  position: absolute;
  top: 71px;
  left: 743px;
  right: 0;
  bottom: 0;
  display: flex;
  flex-direction: column;
  background: #6f9fc0;
  border: 1px solid #50606c;
  border-right: 2px solid #c4c8cc;
  border-top-width: 2px;
  border-radius: 12px 0 0 6px;
  padding: 0 0 4px 5px;
  overflow: hidden;
}

.titlebar {
  flex: none;
  display: flex;
  align-items: center;
  gap: 14px;
  height: 37px;
  margin-left: -5px;
  padding: 2px 10px 0;
  background: linear-gradient(#78a4c4, #7c9fc2 50%, #8cb6d0);
  border-bottom: 2px solid #b9c3ca;
}

.titlebar h1 {
  margin: 0;
  font-size: 18px;
  font-weight: bold;
  color: #1c2a36;
}

.dialog-body {
  flex: 1;
  min-height: 0;
  display: flex;
  background: #eff4f9;
  border-bottom: 3px solid #cdd3da;
}

.dialog-main {
  flex: 1;
  min-width: 0;
  display: flex;
  flex-direction: column;
  padding: 5px 0 4px 2px;
  border-right: 2px solid #c7ccd6;
}

.tabs {
  flex: none;
  display: flex;
  gap: 1px;
  height: 27px;
}

.tab {
  padding: 0 9px 0 10px;
  background: linear-gradient(#eef1f4, #dadee3 60%, #cfd4d9);
  border: 1px solid #aab0b6;
  border-bottom: 0;
  border-radius: 3px 3px 0 0;
  color: #23272d;
}

.tab.active {
  background: linear-gradient(#5e9dcb, #eff4f9 45%);
  border-color: #3f6f97;
}

.tab-rule {
  flex: none;
  height: 6px;
  border-top: 2px solid #4d7ba0;
  border-bottom: 2px solid #6e93b1;
}

.scroller {
  flex: 1;
  min-height: 0;
  display: flex;
  margin: 3px 5px 0 3px;
  overflow: hidden;
  border: 1px solid #6f7478;
  border-width: 2px 0 1px 1px;
}

.form {
  flex: 1;
  min-width: 0;
  padding: 0 15px 0 14px;
}

.field {
  display: flex;
  gap: 16px;
  height: 30px;
  margin-bottom: 23px;
}

.field.cut {
  margin-top: -8px;
  margin-bottom: 24px;
}

.field label {
  flex: none;
  width: 123px;
  text-align: right;
  white-space: nowrap;
}

.form input[type="text"] {
  min-width: 0;
  height: 30px;
  padding: 0 6px 2px;
  background: #fafcfe;
  border: 1px solid #b8bcc0;
  border-top: 2px solid #9a9ea2;
  border-radius: 4px;
}

.field input[type="text"] {
  flex: 1;
  max-width: 712px;
}

.form input[type="text"].green {
  background: #7af87c;
  border-color: #5ed460;
}

.choose {
  width: 135px;
  height: 30px;
  padding-bottom: 4px;
  background: linear-gradient(#d9dde1, #cdd1d5 50%, #b4b8bc 52%, #c0c3c7);
  border: 2px solid #7c8084;
}

.radios {
  display: flex;
  gap: 16px;
  height: 31px;
  padding-left: 298px;
}

.radios label {
  display: flex;
  height: 20px;
  gap: 4px;
  align-items: center;
}

.radios input {
  appearance: none;
  width: 16px;
  height: 16px;
  border: 2px solid #80858a;
  border-radius: 50%;
  background: radial-gradient(#f0f0f0, #c9cccf);
}

.radios input:checked {
  border-color: #3c6c92;
  background: radial-gradient(#16324a 2px, #5b9cc8 4px);
}

.field + .radios {
  margin-top: -12px;
}

.options {
  display: grid;
  grid-template-columns: 181px 337px 115px 321px;
  grid-template-rows: repeat(4, 38px) repeat(3, 37px);
  column-gap: 14px;
  justify-content: start;
  margin-top: 12px;
  height: 275px;
  padding-top: 8px;
  border: 2px solid #fff;
  border-right-color: #8a8f95;
  border-bottom-color: #8a8f95;
}

.options label {
  height: 30px;
  line-height: 28px;
  text-align: right;
  white-space: nowrap;
}

.options label i {
  margin-right: 4px;
  color: #f01818;
  font-style: normal;
  font-weight: bold;
}

.options label.off,
.options label.off i {
  color: #94989c;
}

.options label.off i {
  font-weight: normal;
}

.options label.start {
  text-align: left;
  padding-left: 12px;
}

.form .options input.tinted {
  background: #dfeaf3;
  border-color: #a0a8ae;
}

.form .options input.flat {
  padding: 0 10px;
  background: linear-gradient(#e9ecef, #d6dade);
  border: 2px solid #b9bdc1;
  border-radius: 2px;
  color: #8b8f94;
}

.select {
  position: relative;
  height: 30px;
}

.select select {
  appearance: none;
  display: block;
  width: 100%;
  height: 30px;
  padding: 0 6px;
  background: linear-gradient(#e4e8ec, #cfd3d8 48%, #b2b6ba 52%, #c3c6c9);
  border: 2px solid #777b80;
  border-radius: 2px;
}

.select svg {
  position: absolute;
  right: 4px;
  top: 11px;
}

.select.off select {
  background: linear-gradient(#eaedf0, #d9dcdf);
  border-color: #bcc0c4;
  color: #8b8f94;
  opacity: 1;
}

.select.off svg {
  opacity: .6;
}

/* parameters */
.params {
  margin-top: 18px;
}

.param-box {
  margin: 3px 5px 0;
  height: 160px;
  border: 2px solid #85898e;
}

.param-box table {
  width: 100%;
  table-layout: fixed;
  border-spacing: 0;
}

.param-box th {
  height: 36px;
  padding: 0 14px 2px;
  text-align: left;
  font-weight: normal;
}

.param-box td {
  height: 46px;
  padding: 0 0 6px;
}

.param-box td + td {
  padding-left: 8px;
}

.param-box td div {
  height: 40px;
  line-height: 36px;
  background: #f7fbfe;
  border: 1px solid #c9ced3;
}

.vscroll {
  flex: none;
  display: flex;
  flex-direction: column;
  width: 20px;
  background: #e0e0e0;
}

.vscroll button {
  flex: none;
  display: flex;
  align-items: center;
  justify-content: center;
  height: 21px;
  background: #dadada;
  border: 1px solid #f4f4f4;
  border-right: 2px solid #333;
  border-bottom: 2px solid #333;
}

.thumb {
  height: 315px;
  margin: 115px 0 auto;
  background: #d2d2d2;
  border: 2px solid #f4f4f4;
  border-right-color: #444;
  border-bottom-color: #222;
}

.divider {
  flex: none;
  display: flex;
  align-items: center;
  height: 8px;
  padding-left: 11px;
}

.divider svg + svg {
  margin: auto;
}

.message {
  flex: none;
  height: 101px;
  margin: 0 5px 0 3px;
  border: 1px solid #8a8e92;
}

.actions {
  flex: none;
  display: flex;
  flex-direction: column;
  gap: 7px;
  width: 68px;
  padding: 6px 0 0 6px;
  overflow: hidden;
}

.actions button {
  width: 100px;
  height: 39px;
  padding: 0 11px;
  text-align: left;
  background: linear-gradient(#e2e4e6, #f4f4f2);
  border: 2px solid #3e6d9c;
  border-radius: 7px;
  color: #15181c;
  font-size: 18px;
}

.actions .primary {
  background: linear-gradient(#63bbee, #2d9be3 45%, #1483d4);
  border-color: #2b86c8;
}

.marks {
  position: absolute;
  left: 0;
  top: 0;
  pointer-events: none;
}
```
